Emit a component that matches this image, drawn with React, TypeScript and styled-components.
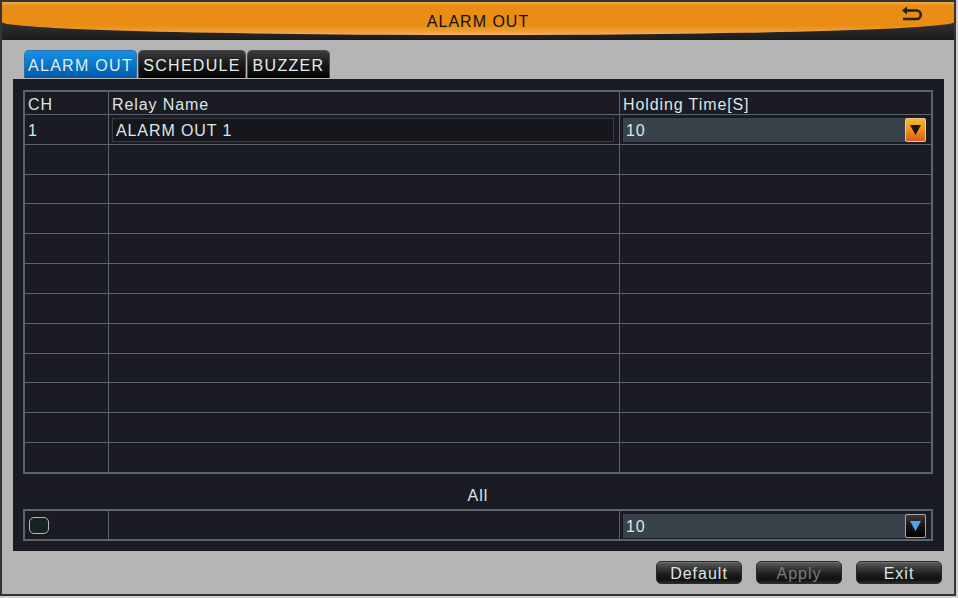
import React from "react";
import styled, { createGlobalStyle } from "styled-components";

const GlobalStyle = createGlobalStyle`
  html, body {
    margin: 0;
    padding: 0;
    background: #cfcfcf;
  }
  body {
    font-family: "Liberation Sans", Arial, sans-serif;
    font-size: 16px;
  }
  * { box-sizing: border-box; }
`;

const Window = styled.div`
  width: 956px;
  height: 596px;
  border: 2px solid #343434;
  background: #b5b5b5;
  display: flex;
  flex-direction: column;
  overflow: hidden;
`;

const Header = styled.div`
  position: relative;
  height: 38px;
  flex: none;
  display: flex;
  justify-content: center;
  align-items: flex-start;
  background: linear-gradient(#4c4c4c 0%, #333 50%, #1d1d1d 100%);
  border-bottom: 1px solid #1a1a1a;
  &::before {
    content: "";
    position: absolute;
    left: 0;
    right: 0;
    top: 0;
    height: 33px;
    border-radius: 0 0 50% 50% / 0 0 13px 13px;
    background: linear-gradient(#f3a847 0px, #e98d16 4px, #e88c13 70%, #f0a23c 92%, #f6b45a 100%);
  }
`;

const Title = styled.div`
  position: relative;
  z-index: 1;
  margin-top: 11px;
  line-height: 18px;
  color: #111;
  letter-spacing: 1px;
`;

const BackIcon = styled.svg`
  position: absolute;
  z-index: 1;
  left: 897px;
  top: 3px;
`;

const Body = styled.div`
  flex: 1;
  display: flex;
  flex-direction: column;
  padding: 10px 10px 0 11px;
`;

const TabBar = styled.div`
  display: flex;
  gap: 1px;
  margin-left: 11px;
  height: 28px;
  margin-bottom: 1px;
`;

const Tab = styled.div<{ $active?: boolean; $w: number }>`
  width: ${(p) => p.$w}px;
  height: 28px;
  padding-top: 3px;
  border: 1px solid ${(p) => (p.$active ? "#2a6fb0" : "#4a4a4a")};
  border-bottom: none;
  border-radius: 5px 5px 0 0;
  display: flex;
  align-items: center;
  justify-content: center;
  color: #e4ecec;
  letter-spacing: 1.3px;
  background: ${(p) =>
    p.$active
      ? "linear-gradient(#1792e6 0%, #0a79cc 45%, #0059a6 100%)"
      : "linear-gradient(#3c3c3c 0%, #1c1c1c 45%, #000 100%)"};
`;

const Panel = styled.div`
  height: 472px;
  background: #1a1b23;
  padding: 11px 11px 10px 10px;
  display: flex;
  flex-direction: column;
`;

const Table = styled.div<{ $h: number }>`
  height: ${(p) => p.$h}px;
  border: 2px solid #5b646c;
  display: flex;
  flex-direction: column;
  flex: none;
`;

const Row = styled.div<{ $head?: boolean }>`
  display: flex;
  flex: ${(p) => (p.$head ? "0 0 23px" : "1 1 0")};
  border-bottom: 1px solid #5b646c;
  &:last-child {
    border-bottom: none;
  }
`;

const Cell = styled.div<{ $w?: number }>`
  ${(p) => (p.$w ? `width: ${p.$w}px; flex: none;` : "flex: 1;")}
  display: flex;
  align-items: center;
  padding: 0 5px 0 3px;
  color: #dde6e6;
  letter-spacing: 0.9px;
  & + & {
    border-left: 1px solid #5b646c;
  }
`;

const CellText = styled.span`
  padding-top: 3px;
`;

const NameInput = styled.div`
  width: 504px;
  height: 24px;
  margin-top: 2px;
  border: 1px solid #383b42;
  background: #16171d;
  display: flex;
  align-items: center;
  padding: 2px 0 0 3px;
  color: #dde6e6;
  letter-spacing: 0.9px;
`;

const Select = styled.div`
  flex: 1;
  height: 24px;
  margin-top: 1px;
  display: flex;
  align-items: center;
  background: #39424a;
  padding-left: 3px;
  color: #dde6e6;
  letter-spacing: 0.9px;
`;

const SelectValue = styled.span`
  flex: 1;
  padding-top: 2px;
`;

const DropButton = styled.div<{ $variant: "orange" | "blue" }>`
  width: 21px;
  height: 24px;
  flex: none;
  display: flex;
  align-items: center;
  justify-content: center;
  border: 1px solid ${(p) => (p.$variant === "orange" ? "#e8c9a0" : "#a8a8a8")};
  border-radius: 2px;
  background: ${(p) =>
    p.$variant === "orange"
      ? "linear-gradient(#f8b524 0%, #f09a1e 45%, #e2701c 80%, #d85e1a 100%)"
      : "linear-gradient(#3a3a3a 0%, #161616 50%, #000 100%)"};
  margin-top: 1px;
`;

const AllLabel = styled.div`
  height: 35px;
  flex: none;
  display: flex;
  align-items: center;
  justify-content: center;
  color: #dde6e6;
  letter-spacing: 1px;
  padding-top: 9px;
`;

const CheckBox = styled.div`
  width: 20px;
  height: 17px;
  border: 1.5px solid #b4b8b8;
  border-radius: 5px;
  background: #182424;
  margin-left: 1px;
`;

const ButtonRow = styled.div`
  display: flex;
  justify-content: flex-end;
  gap: 14px;
  margin-top: 10px;
  padding-right: 2px;
`;

const Button = styled.div<{ $disabled?: boolean }>`
  width: 86px;
  height: 23px;
  padding-top: 2px;
  border: 1px solid #2a2a2a;
  border-radius: 5px;
  display: flex;
  align-items: center;
  justify-content: center;
  letter-spacing: 1px;
  color: ${(p) => (p.$disabled ? "#7c7c7c" : "#dce6e6")};
  background: linear-gradient(#5e5e5e 0%, #3a3a3a 30%, #1c1c1c 60%, #111 85%, #2a2a2a 100%);
  box-shadow: inset 0 1px 0 rgba(255, 255, 255, 0.12);
`;

const Triangle = ({ color }: { color: string }) => (
  <svg width="11" height="10" viewBox="0 0 11 10">
    <polygon points="0,0 11,0 5.5,10" fill={color} />
  </svg>
);

const rows = Array.from({ length: 11 });

export default function App() {
  return (
    <>
      <GlobalStyle />
      <Window>
        <Header>
          <Title>ALARM OUT</Title>
          <BackIcon width="26" height="18" viewBox="0 0 26 18">
            <path
              d="M7 5.5 H17.5 A4.2 4.2 0 0 1 17.5 14 H4"
              fill="none"
              stroke="#222"
              strokeWidth="2.6"
            />
            <polygon points="3,5.5 8,1.5 8,9.5" fill="#222" />
          </BackIcon>
        </Header>
        <Body>
          <TabBar>
            <Tab $active $w={113}>ALARM OUT</Tab>
            <Tab $w={108}>SCHEDULE</Tab>
            <Tab $w={83}>BUZZER</Tab>
          </TabBar>
          <Panel>
            <Table $h={384}>
              <Row $head>
                <Cell $w={83}><CellText>CH</CellText></Cell>
                <Cell $w={511}><CellText>Relay Name</CellText></Cell>
                <Cell><CellText>Holding Time[S]</CellText></Cell>
              </Row>
              <Row>
                <Cell $w={83}><CellText>1</CellText></Cell>
                <Cell $w={511}>
                  <NameInput>ALARM OUT 1</NameInput>
                </Cell>
                <Cell>
                  <Select>
                    <SelectValue>10</SelectValue>
                    <DropButton $variant="orange">
                      <Triangle color="#1b1410" />
                    </DropButton>
                  </Select>
                </Cell>
              </Row>
              {rows.map((_, i) => (
                <Row key={i}>
                  <Cell $w={83} />
                  <Cell $w={511} />
                  <Cell />
                </Row>
              ))}
            </Table>
            <AllLabel>All</AllLabel>
            <Table $h={32}>
              <Row>
                <Cell $w={83}>
                  <CheckBox />
                </Cell>
                <Cell $w={511} />
                <Cell>
                  <Select>
                    <SelectValue>10</SelectValue>
                    <DropButton $variant="blue">
                      <Triangle color="#4da2f2" />
                    </DropButton>
                  </Select>
                </Cell>
              </Row>
            </Table>
          </Panel>
          <ButtonRow>
            <Button>Default</Button>
            <Button $disabled>Apply</Button>
            <Button>Exit</Button>
          </ButtonRow>
        </Body>
      </Window>
    </>
  );
}
